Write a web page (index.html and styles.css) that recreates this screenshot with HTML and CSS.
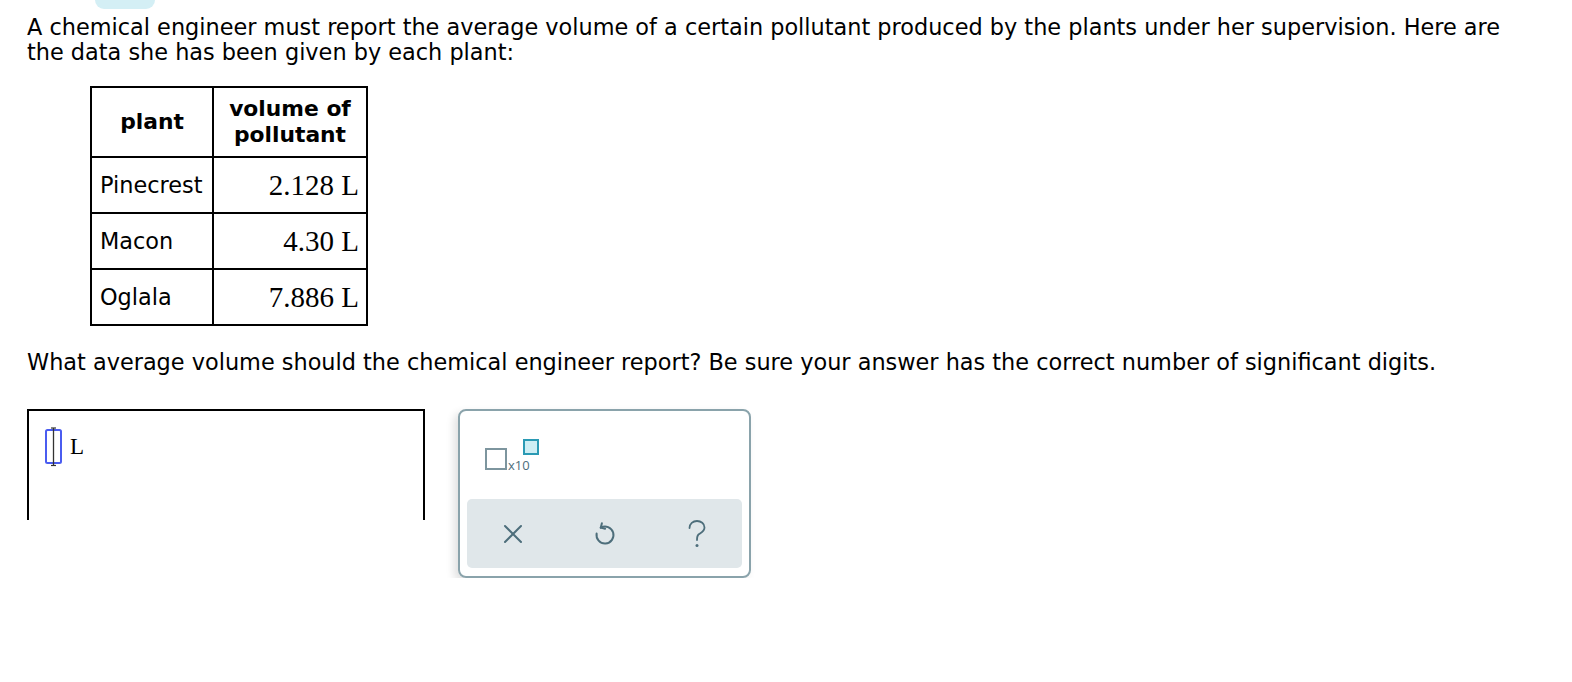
FILE: index.html
```html
<!DOCTYPE html>
<html>
<head>
<meta charset="utf-8">
<link rel="stylesheet" href="styles.css">
</head>
<body>
<div class="tab-peek"></div>
<main class="page">
  <p class="intro">A chemical engineer must report the average volume of a certain pollutant produced by the plants under her supervision. Here are the data she has been given by each plant:</p>
  <table class="data">
    <thead>
      <tr><th class="c1">plant</th><th class="c2">volume of<br>pollutant</th></tr>
    </thead>
    <tbody>
      <tr><td class="name">Pinecrest</td><td class="val">2.128&nbsp;L</td></tr>
      <tr><td class="name">Macon</td><td class="val">4.30&nbsp;L</td></tr>
      <tr><td class="name">Oglala</td><td class="val">7.886&nbsp;L</td></tr>
    </tbody>
  </table>
  <p class="question">What average volume should the chemical engineer report? Be sure your answer has the correct number of significant digits.</p>
  <div class="answer-row">
    <div class="answer-box">
      <div class="entry">
        <svg class="cursor" width="20" height="40" viewBox="0 0 20 40">
          <rect x="2" y="3" width="15" height="33" rx="1.5" fill="none" stroke="#4a5cf0" stroke-width="2"/>
          <line x1="9.5" y1="1" x2="9.5" y2="38" stroke="#333" stroke-width="1.3"/>
          <line x1="7" y1="1" x2="12" y2="1" stroke="#333" stroke-width="1.2"/>
          <line x1="7" y1="38.5" x2="12" y2="38.5" stroke="#333" stroke-width="1.2"/>
        </svg>
        <span class="unit">L</span>
      </div>
    </div>
    <div class="palette">
      <div class="tools">
        <div class="sci">
          <span class="sq"></span><span class="x10">x10</span><span class="exp"></span>
        </div>
      </div>
      <div class="actions">
        <svg class="icon" width="22" height="22" viewBox="0 0 22 22"><path d="M3 3 L19 19 M19 3 L3 19" stroke="#4d6e7b" stroke-width="2" fill="none" stroke-linecap="round"/></svg>
        <svg class="icon" width="24" height="26" viewBox="0 0 24 26"><path d="M7.75 6.64 A8.5 8.5 0 1 1 3.63 12.52" stroke="#4d6e7b" stroke-width="2" fill="none" stroke-linecap="round"/><path d="M8.9 2.3 L7.75 6.64 L12.1 7.8" stroke="#4d6e7b" stroke-width="2" fill="none" stroke-linecap="round" stroke-linejoin="round"/></svg>
        <svg class="icon" width="22" height="30" viewBox="0 0 22 30"><path d="M3.5 9 C3.5 4.5 7 2 11 2 C15 2 18.5 4.5 18.5 8.5 C18.5 12.5 15 13.5 12.5 15.5 C11.2 16.6 11 18 11 21" stroke="#4d6e7b" stroke-width="1.8" fill="none" stroke-linecap="round"/><circle cx="11" cy="26.5" r="1.5" fill="#4d6e7b"/></svg>
      </div>
    </div>
  </div>
</main>
</body>
</html>
```
FILE: styles.css
```css
html, body {
  margin: 0;
  padding: 0;
  background: #fff;
}
body {
  font-family: "DejaVu Sans", Verdana, sans-serif;
  color: #000;
}
.tab-peek {
  position: absolute;
  top: 0;
  left: 95px;
  width: 60px;
  height: 9px;
  background: #d4eff5;
  border-radius: 0 0 12px 12px;
}
.page {
  padding: 15px 0 0 27px;
}
.intro {
  margin: 0;
  width: 1510px;
  font-size: 22.4px;
  line-height: 25px;
}
.data {
  margin: 21px 0 0 63px;
  border-collapse: collapse;
  border: 2px solid #000;
}
.data th, .data td {
  border: 2px solid #000;
  padding: 0;
}
.data th {
  font-size: 21.8px;
  font-weight: bold;
  line-height: 26px;
  height: 68px;
  text-align: center;
}
.data .c1 { width: 120px; }
.data .c2 { width: 152px; }
.data td {
  height: 54px;
}
.data .name {
  font-size: 22.4px;
  text-align: left;
  padding-left: 8px;
}
.data .val {
  font-family: "Liberation Serif", "Times New Roman", serif;
  font-size: 29px;
  text-align: right;
  padding-right: 7px;
}
.question {
  margin: 24px 0 0;
  font-size: 22.4px;
  line-height: 25px;
}
.answer-row {
  display: flex;
  align-items: flex-start;
  gap: 33px;
  margin-top: 34px;
}
.answer-box {
  width: 398px;
  height: 111px;
  border: 2px solid #000;
  border-bottom: none;
  padding: 16px 0 0 15px;
  box-sizing: border-box;
}
.entry {
  display: flex;
  align-items: center;
  gap: 6px;
}
.cursor { display: block; }
.unit {
  font-family: "Liberation Serif", "Times New Roman", serif;
  font-size: 23px;
}
.palette {
  width: 293px;
  height: 169px;
  box-sizing: border-box;
  border: 2px solid #8aa3ab;
  border-radius: 8px;
  box-shadow: -4px 4px 8px rgba(0, 0, 0, 0.12);
  padding: 0 7px 8px 7px;
  display: flex;
  flex-direction: column;
}
.tools {
  height: 88px;
  padding: 28px 0 0 18px;
  box-sizing: border-box;
}
.sci {
  position: relative;
  display: flex;
  align-items: flex-end;
  width: 60px;
  height: 31px;
}
.sq {
  width: 22px;
  height: 22px;
  box-sizing: border-box;
  border: 2px solid #7d959e;
}
.x10 {
  font-family: "Open Sans", "DejaVu Sans", sans-serif;
  font-size: 13px;
  color: #4d6e7b;
  line-height: 12px;
  margin-left: 1px;
  margin-bottom: -1px;
}
.exp {
  position: absolute;
  left: 38px;
  top: 0;
  width: 16px;
  height: 16px;
  box-sizing: border-box;
  border: 2px solid #2a9ab4;
  background: #cdeef4;
}
.actions {
  flex: 1;
  background: #e0e7ea;
  border-radius: 5px;
  display: flex;
  align-items: center;
  justify-content: space-around;
}
.icon { display: block; }
```
